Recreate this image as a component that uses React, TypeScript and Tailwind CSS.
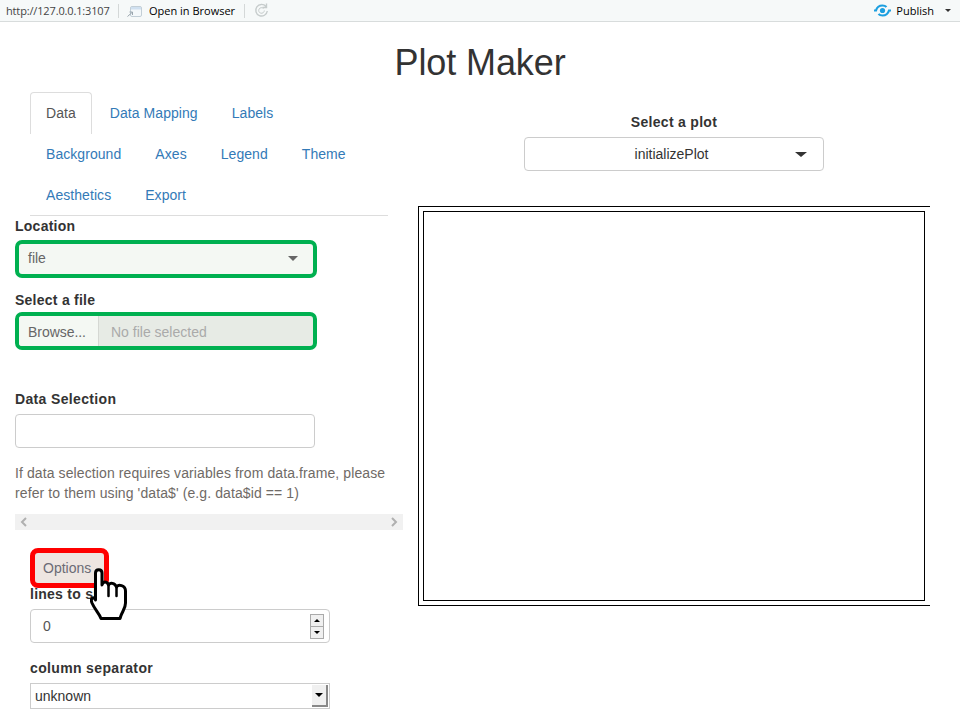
import React from 'react';

const tabRows = [
  ['Data', 'Data Mapping', 'Labels'],
  ['Background', 'Axes', 'Legend', 'Theme'],
  ['Aesthetics', 'Export'],
];

const PublishIcon = () => (
  <svg className="block" width="17" height="13" viewBox="0 0 17 13" fill="none" stroke="#1c9fe0" strokeWidth="2.2">
    <circle cx="8.5" cy="6.5" r="2.6" fill="#1c9fe0" stroke="none" />
    <path d="M0 6.5 H2 C3 3 5.5 1.5 8.5 1.5 C10 1.5 11.5 2 12.5 3" />
    <path d="M17 6.5 H15 C14 10 11.5 11.5 8.5 11.5 C7 11.5 5.5 11 4.5 10" />
  </svg>
);

const HandCursor = () => (
  <svg width="38" height="54" viewBox="0 0 38 54" fill="white" stroke="black" strokeWidth="3" strokeLinejoin="round" strokeLinecap="round">
    <path d="M5.5 6 C5.5 1.5 12 1.5 12 6 V18 C13 14 17 14 18.5 18 C20 15 25 16 26.5 20 C28 17 35.5 18 35.5 24 V36 C35.5 42 32 44 30 51.5 H11 C9 46 5 43 2 36 C0 31 4 29 5.5 33 Z" />
    <path d="M18.5 18 V29 M26.5 20 V29" fill="none" strokeWidth="2.5" />
  </svg>
);

const App: React.FC = () => {
  return (
    <div className="relative w-[960px] h-[720px] overflow-hidden bg-white text-[14px] leading-[20px] text-[#333] font-['Liberation_Sans',Arial,sans-serif]">
      {/* RStudio viewer toolbar */}
      <div className="flex items-center h-[22px] pl-[6px] pr-[9px] bg-[#f6f9f9] border-b border-[#d8dcdc] text-[11px] font-['Open_Sans',sans-serif]">
        <span className="text-[#444] w-[112px] whitespace-nowrap tracking-[-0.15px]">http://127.0.0.1:3107</span>
        <span className="w-px h-[14px] bg-[#d4d8d8]" />
        <svg className="ml-[7px]" width="17" height="14" viewBox="0 0 17 14" fill="none">
          <rect x="4.5" y="2.5" width="11" height="10" rx="1.5" fill="#f4f8fa" stroke="#c2ced6" />
          <rect x="5" y="3" width="10" height="2.5" fill="#cfe0f0" />
          <path d="M1.5 12.5 L6 8.5 M3.5 8 H6.5 V11" stroke="#9aa6ae" />
        </svg>
        <span className="ml-[6px] text-black whitespace-nowrap">Open in Browser</span>
        <span className="ml-[9px] w-px h-[14px] bg-[#d4d8d8]" />
        <svg className="ml-[9px]" width="15" height="15" viewBox="0 0 15 15" fill="none" stroke="#c6cccc" strokeWidth="1.4">
          <path d="M12 3.5 A5.8 5.8 0 1 0 13.3 8 M12.5 0.5 V4.5 H8.5" />
          <path d="M9.5 5.5 A2.8 2.8 0 1 0 10.3 7.5" strokeWidth="1" />
        </svg>
        <span className="ml-auto"><PublishIcon /></span>
        <span className="ml-[5px] text-black whitespace-nowrap">Publish</span>
        <span className="ml-[11px] block w-0 h-0 border-x-[3px] border-x-transparent border-t-[3px] border-t-[#333]" />
      </div>

      <h1 className="mt-[21px] mb-[9px] text-center text-[36px] leading-[40px] font-normal tracking-[-0.1px]">Plot Maker</h1>

      <div className="flex">
        {/* sidebar */}
        <div className="w-[418px] pl-[15px] shrink-0">
          <div className="ml-[15px] w-[358px] border-b border-[#ddd] tracking-[0.06px]">
            {tabRows.map((row, i) => (
              <div key={i} className="flex h-[41px]">
                {row.map((tab) => (
                  <a
                    key={tab}
                    className={
                      tab === 'Data'
                        ? 'mr-[2px] h-[42px] px-[15px] py-[10px] border border-b-0 border-[#ddd] rounded-t-[4px] bg-white text-[#555] relative'
                        : 'mr-[2px] px-[16px] py-[11px] text-[#337ab7]'
                    }
                  >
                    {tab}
                  </a>
                ))}
              </div>
            ))}
          </div>

          <label className="block font-bold tracking-[0.25px]">Location</label>
          <div className="mt-[4px] flex items-center justify-between w-[302px] h-[38px] pl-[9px] pr-[15px] pb-[2px] border-4 border-[#00b050] rounded-[7px] bg-[#f4f8f3] text-[#666]">
            <span>file</span>
            <span className="block w-0 h-0 border-x-[5px] border-x-transparent border-t-[5px] border-t-[#666]" />
          </div>

          <label className="block mt-[12px] font-bold tracking-[0.25px]">Select a file</label>
          <div className="mt-[2px] flex w-[302px] h-[38px] border-4 border-[#00b050] rounded-[7px] bg-[#e7ebe5]">
            <span className="w-[80px] pl-[9px] leading-[32px] bg-[#f4f8f3] border-r border-[#d5d8d3] text-[#666] rounded-l-[3px] tracking-[-0.05px]">Browse...</span>
            <span className="pl-[12px] leading-[32px] text-[#aaa]">No file selected</span>
          </div>

          <label className="block mt-[39px] font-bold tracking-[0.35px]">Data Selection</label>
          <input className="block mt-[5px] w-[300px] h-[34px] border border-[#ccc] rounded-[4px] bg-white" />

          <p className="mt-[15px] w-[388px] text-[#6f6a66] tracking-[0.1px] whitespace-nowrap">
            If data selection requires variables from data.frame, please
            <br />
            refer to them using 'data$' (e.g. data$id == 1)
          </p>

          <div className="mt-[11px] flex items-center justify-between w-[388px] h-[16px] px-[5px] bg-[#f1f1f1]">
            <svg width="7" height="10" viewBox="0 0 7 10" fill="none" stroke="#b0b0b0" strokeWidth="2"><path d="M6 1 L2 5 L6 9" /></svg>
            <svg width="7" height="10" viewBox="0 0 7 10" fill="none" stroke="#b0b0b0" strokeWidth="2"><path d="M1 1 L5 5 L1 9" /></svg>
          </div>

          <div className="ml-[15px]">
            <button className="block mt-[18px] w-[79px] h-[40px] pl-[8px] text-left border-[5px] border-[#ff0000] rounded-[8px] bg-[#eee6e1] text-[#6b6b75]">Options</button>
            <label className="block -mt-[4px] font-bold leading-[20px] tracking-[0.25px]">lines to skip</label>
            <div className="mt-[5px] flex items-center justify-between w-[300px] h-[34px] pl-[12px] pr-[5px] border border-[#ccc] rounded-[4px] text-[#555]">
              <span>0</span>
              <span className="flex flex-col w-[14px] h-[25px] border border-[#aaa] bg-[#f0f0f0]">
                <span className="flex-1 flex items-center justify-center border-b border-[#aaa]"><span className="block w-0 h-0 border-x-[3px] border-x-transparent border-b-[3px] border-b-black" /></span>
                <span className="flex-1 flex items-center justify-center"><span className="block w-0 h-0 border-x-[3px] border-x-transparent border-t-[3px] border-t-black" /></span>
              </span>
            </div>
            <label className="block mt-[15px] font-bold tracking-[0.35px]">column separator</label>
            <div className="mt-[5px] flex items-center justify-between w-[300px] h-[26px] pl-[4px] pr-px border border-[#ccc] text-[#333]">
              <span>unknown</span>
              <span className="flex items-center justify-center w-[16px] h-[22px] bg-[#f0f0f0] border-r-2 border-b-2 border-[#888]">
                <span className="block w-0 h-0 border-x-[4px] border-x-transparent border-t-[4px] border-t-black" />
              </span>
            </div>
          </div>
        </div>

        {/* plot panel */}
        <div className="w-[512px] shrink-0">
          <div className="mt-[20px] text-center font-bold tracking-[0.3px]">Select a plot</div>
          <div className="relative mt-[5px] mx-auto flex items-center justify-center w-[300px] h-[34px] pr-[5px] border border-[#ccc] rounded-[4px] text-[#333]">
            <span>initializePlot</span>
            <span className="absolute right-[16px] block w-0 h-0 border-x-[6px] border-x-transparent border-t-[5px] border-t-[#333]" />
          </div>
          <div className="mt-[35px] w-[512px] h-[400px] p-[4px] border-y border-l border-black">
            <div className="w-[502px] h-[390px] border border-black" />
          </div>
        </div>
      </div>

      {/* pointer drawn over the tutorial shot */}
      <div className="absolute left-[90px] top-[567px]">
        <HandCursor />
      </div>
    </div>
  );
};

export default App;
